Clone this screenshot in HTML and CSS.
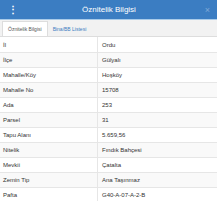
FILE: index.html
```html
<!DOCTYPE html>
<html>
<head>
<meta charset="utf-8">
<link rel="stylesheet" href="styles.css">
</head>
<body>
<div class="panel">
  <div class="header">
    <span class="menu">⋮</span>
    <span class="title">Öznitelik Bilgisi</span>
    <span class="close">×</span>
  </div>
  <div class="tabs">
    <div class="tab active">Öznitelik Bilgisi</div>
    <div class="tab">Bina/BB Listesi</div>
  </div>
  <table class="attrs">
    <tr><td>İl</td><td>Ordu</td></tr>
    <tr><td>İlçe</td><td>Gülyalı</td></tr>
    <tr><td>Mahalle/Köy</td><td>Hoşköy</td></tr>
    <tr><td>Mahalle No</td><td>15708</td></tr>
    <tr><td>Ada</td><td>253</td></tr>
    <tr><td>Parsel</td><td>31</td></tr>
    <tr><td>Tapu Alanı</td><td>5.659,56</td></tr>
    <tr><td>Nitelik</td><td>Fındık Bahçesi</td></tr>
    <tr><td>Mevkii</td><td>Çatalta</td></tr>
    <tr><td>Zemin Tip</td><td>Ana Taşınmaz</td></tr>
    <tr><td>Pafta</td><td>G40-A-07-A-2-B</td></tr>
  </table>
</div>
</body>
</html>
```
FILE: styles.css
```css
html, body {
  margin: 0;
  padding: 0;
  background: #ffffff;
}
body {
  font-family: "Liberation Sans", Arial, sans-serif;
  width: 217px;
  height: 201px;
  overflow: hidden;
}
.panel {
  display: flex;
  flex-direction: column;
}
.header {
  height: 19px;
  background: #3b7dc2;
  display: flex;
  align-items: center;
  justify-content: space-between;
  padding: 0 7px 0 8px;
  color: #fff;
  border-bottom: 1px solid #a9cbe9;
}
.menu {
  font-size: 10px;
  font-weight: bold;
  width: 10px;
}
.title {
  font-size: 8px;
}
.close {
  font-size: 9px;
  color: #7fa9d6;
  width: 10px;
  text-align: right;
}
.tabs {
  background: #f2f2f2;
  height: 16px;
  display: flex;
  align-items: flex-end;
  padding-left: 2px;
  border-bottom: 1px solid #dddddd;
}
.tab {
  font-size: 5px;
  color: #3a7cc1;
  padding: 0 5px;
  height: 14px;
  line-height: 14px;
}
.tab.active {
  background: #ffffff;
  color: #555555;
  border: 1px solid #dddddd;
  border-bottom: none;
}
.attrs {
  border-collapse: collapse;
  width: 100%;
  font-size: 6px;
  color: #333333;
}
.attrs td {
  height: 14px;
  padding: 0 3px;
  border-top: 1px solid #e6e6e6;
}
.attrs tr:first-child td {
  border-top: none;
  height: 15px;
}
.attrs td:first-child {
  width: 91px;
  border-right: 1px solid #e6e6e6;
}
.attrs td:last-child {
  padding-left: 4px;
}
.attrs tr:nth-child(even) td {
  background: #f9f9f9;
}
```
